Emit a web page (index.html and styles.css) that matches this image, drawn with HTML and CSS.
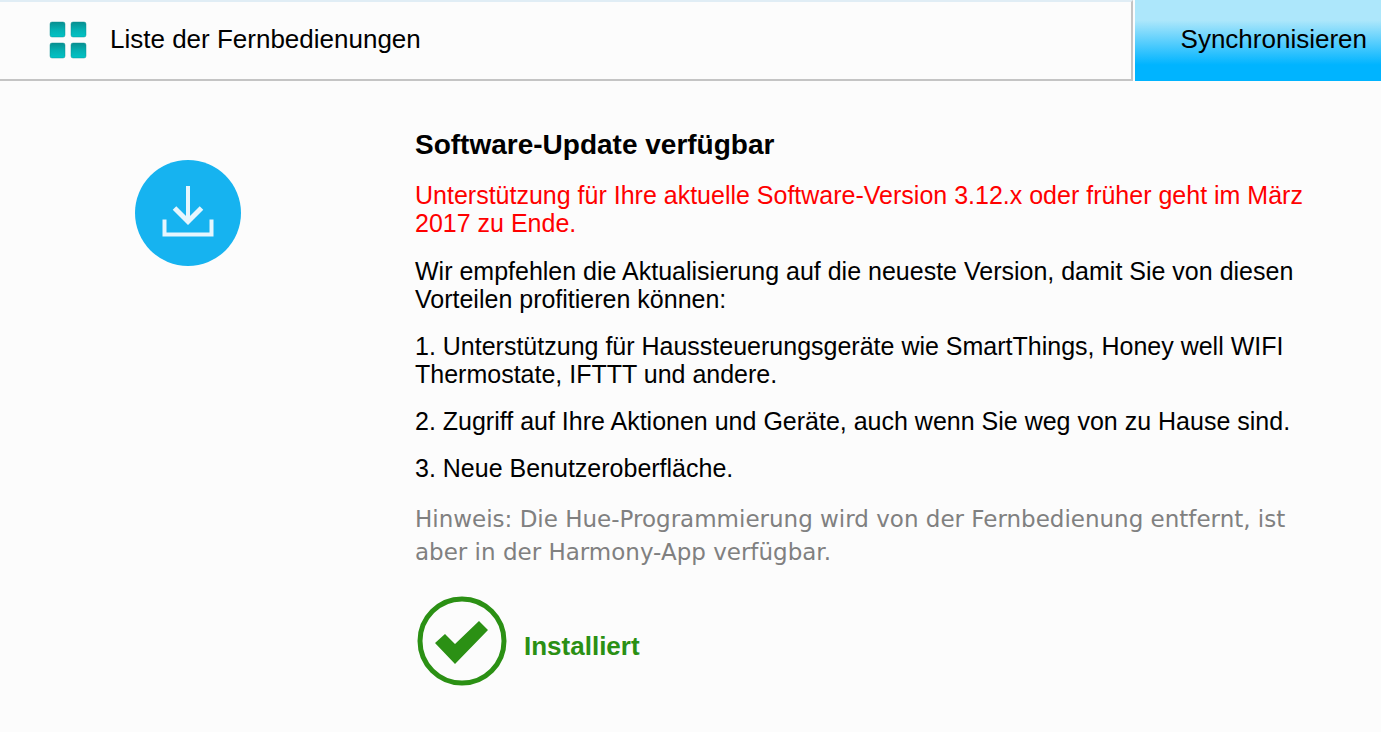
FILE: index.html
```html
<!DOCTYPE html>
<html lang="de">
<head>
  <meta charset="UTF-8">
  <meta name="viewport" content="width=device-width, initial-scale=1.0">
  <title>Software-Update</title>
  <link rel="stylesheet" href="styles.css">
</head>
<body>
  <header class="top-bar">
    <a class="remote-list" href="#">
      <svg class="grid-icon" viewBox="0 0 40 40" aria-hidden="true">
        <defs>
          <linearGradient id="tile" x1="0" y1="0" x2="0" y2="1">
            <stop offset="0" stop-color="#078f90"/>
            <stop offset="0.5" stop-color="#05b0b2"/>
            <stop offset="1" stop-color="#02c3c5"/>
          </linearGradient>
        </defs>
        <g fill="url(#tile)" stroke="#088f92" stroke-opacity="0.45">
          <rect x="2" y="3" width="15" height="15" rx="2"/>
          <rect x="23" y="3" width="15" height="15" rx="2"/>
          <rect x="2" y="24" width="15" height="15" rx="2"/>
          <rect x="23" y="24" width="15" height="15" rx="2"/>
        </g>
      </svg>
      Liste der Fernbedienungen
    </a>
    <button type="button" class="sync-btn">Synchronisieren</button>
  </header>

  <main class="update">
    <svg class="download-icon" viewBox="0 0 106 106" aria-hidden="true">
      <circle cx="53" cy="53" r="53" fill="#16b3f0"/>
      <g fill="none" stroke="#e6f6fe" stroke-width="4">
        <path d="M53 26v34"/>
        <path d="M39.500 48l13.500 13.500 13.500-13.500" stroke-width="5"/>
        <path d="M29.500 59.500v15h47v-15"/>
      </g>
    </svg>

    <div class="details">
      <h1>Software-Update verfügbar</h1>
      <p class="warning">Unterstützung für Ihre aktuelle Software-Version 3.12.x oder früher geht im März 2017 zu Ende.</p>
      <p>Wir empfehlen die Aktualisierung auf die neueste Version, damit Sie von diesen Vorteilen profitieren können:</p>
      <p>1. Unterstützung für Haussteuerungsgeräte wie SmartThings, Honey well WIFI Thermostate, IFTTT und andere.</p>
      <p>2. Zugriff auf Ihre Aktionen und Geräte, auch wenn Sie weg von zu Hause sind.</p>
      <p>3. Neue Benutzeroberfläche.</p>
      <p class="note">Hinweis: Die Hue-Programmierung wird von der Fernbedienung entfernt, ist aber in der Harmony-App verfügbar.</p>

      <div class="status">
        <svg class="check-icon" viewBox="0 0 90 90" aria-hidden="true">
          <circle cx="45" cy="45" r="42" fill="none" stroke="#2b9014" stroke-width="5"/>
          <path d="M18 47l10-9 10 10 24-23 9 9-33 34z" fill="#2b9014"/>
        </svg>
        <span>Installiert</span>
      </div>
    </div>
  </main>
</body>
</html>
```

FILE: styles.css
```css
* {
  box-sizing: border-box;
}
body {
  margin: 0;
  background: #fcfcfc;
  color: #000;
  font-family: "Liberation Sans", Arial, sans-serif;
  font-size: 25px;
  line-height: 28px;
}
.top-bar {
  display: flex;
  height: 81px;
  font-size: 26px;
}
.remote-list {
  flex: 1;
  display: flex;
  align-items: center;
  gap: 22px;
  margin-right: 2px;
  padding: 0 0 3px 48px;
  border-top: 2px solid #e0edf5;
  border-right: 2px solid #c4c4c4;
  border-bottom: 2px solid #c4c4c4;
  color: inherit;
  text-decoration: none;
}
.grid-icon {
  width: 40px;
  height: 40px;
}
.sync-btn {
  padding: 0 14px 3px 46px;
  border: none;
  background: linear-gradient(#ade7fb 25%, #00b4ff 80%);
  color: inherit;
  font: inherit;
  cursor: pointer;
}
.update {
  display: flex;
  align-items: flex-start;
  padding: 50px 70px 40px 135px;
}
.download-icon {
  flex-shrink: 0;
  width: 106px;
  height: 106px;
  margin: 29px 174px 0 0;
}
.details {
  flex: 1;
}
h1 {
  margin: 0 0 22px;
  font-size: 28px;
  line-height: 28px;
}
p {
  margin: 0 0 19px;
}
.warning {
  margin-bottom: 20px;
  color: #f00;
}
.note {
  margin: 21px 0 27px;
  color: #808080;
  font-family: "DejaVu Sans", Verdana, sans-serif;
  font-size: 23px;
  line-height: 33px;
}
.status {
  display: flex;
  align-items: center;
  gap: 17px;
  color: #2b9014;
  font-size: 26px;
  font-weight: bold;
}
.status span {
  padding-top: 10px;
}
.check-icon {
  width: 90px;
  height: 90px;
  margin-left: 2px;
}

@media (max-width: 900px) {
  .update {
    flex-direction: column;
    gap: 30px;
    padding: 30px;
  }
  .download-icon {
    margin: 0;
  }
}
```
